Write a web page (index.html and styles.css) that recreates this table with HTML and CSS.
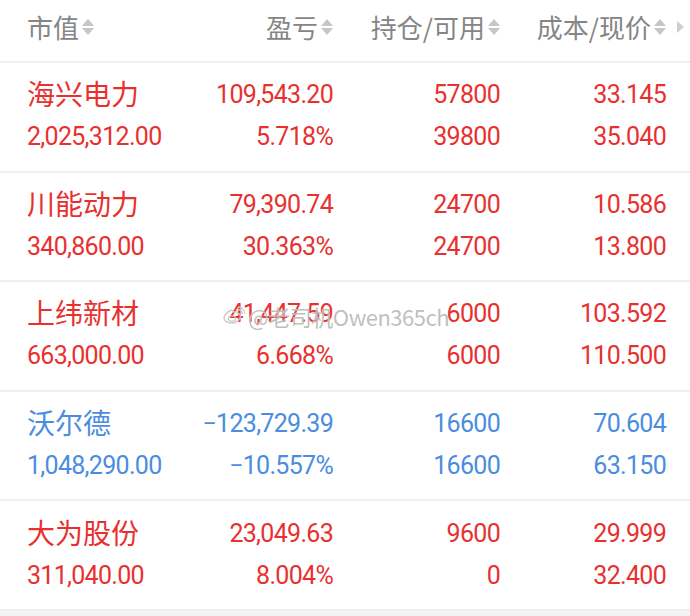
FILE: index.html
```html
<!DOCTYPE html>
<html lang="zh">
<head>
<meta charset="utf-8">
<title>持仓</title>
<link rel="stylesheet" href="styles.css">
</head>
<body>
<div class="page">
  <div class="head">
    <div class="hcell left">市值<span class="sort"></span></div>
    <div class="hcell">盈亏<span class="sort"></span></div>
    <div class="hcell">持仓/可用<span class="sort"></span></div>
    <div class="hcell">成本/现价<span class="sort"></span></div>
    <div class="more"><span class="tri"></span></div>
  </div>

  <div class="row up">
    <div class="name">海兴电力</div><div class="num">109,543.20</div><div class="num">57800</div><div class="num">33.145</div>
    <div class="val">2,025,312.00</div><div class="num">5.718%</div><div class="num">39800</div><div class="num">35.040</div>
  </div>
  <div class="row up">
    <div class="name">川能动力</div><div class="num">79,390.74</div><div class="num">24700</div><div class="num">10.586</div>
    <div class="val">340,860.00</div><div class="num">30.363%</div><div class="num">24700</div><div class="num">13.800</div>
  </div>
  <div class="row up wm-row">
    <div class="name">上纬新材</div><div class="num">41,447.59</div><div class="num">6000</div><div class="num">103.592</div>
    <div class="val">663,000.00</div><div class="num">6.668%</div><div class="num">6000</div><div class="num">110.500</div>
    <div class="watermark">
      <svg class="wb" viewBox="0 0 24 20" width="24" height="20"><path d="M10 17c-4.5 0-8-2-8-5 0-2.5 3-6 6.5-7.5 2-.8 3.3-.2 2.8 1.6 1.8-.6 4.5-1 4.2 1 1.5.4 3 1.3 3 3 0 3.5-4 6.9-8.5 6.9z" fill="none" stroke="#c8c8c8" stroke-width="1.4"/><ellipse cx="10" cy="12.5" rx="3.5" ry="2.6" fill="none" stroke="#c8c8c8" stroke-width="1.2"/><path d="M16 3.5c2.5 0 4.5 2 4.3 4.5M16 1c4 0 7 3.2 6.7 7" fill="none" stroke="#c8c8c8" stroke-width="1.3"/></svg>
      <span>@老司机Owen365ch</span>
    </div>
  </div>
  <div class="row down">
    <div class="name">沃尔德</div><div class="num">−123,729.39</div><div class="num">16600</div><div class="num">70.604</div>
    <div class="val">1,048,290.00</div><div class="num">−10.557%</div><div class="num">16600</div><div class="num">63.150</div>
  </div>
  <div class="row up">
    <div class="name">大为股份</div><div class="num">23,049.63</div><div class="num">9600</div><div class="num">29.999</div>
    <div class="val">311,040.00</div><div class="num">8.004%</div><div class="num">0</div><div class="num">32.400</div>
  </div>
  <div class="tail"></div>
</div>
</body>
</html>
```

FILE: styles.css
```css
html, body {
  margin: 0;
  padding: 0;
  background: #ffffff;
}
.page {
  width: 690px;
  height: 616px;
  overflow: hidden;
  font-family: Roboto, "Noto Sans CJK SC", sans-serif;
}
.head {
  display: grid;
  grid-template-columns: 160px 146px 167px 166px 24px;
  align-items: center;
  height: 60px;
  padding-left: 27px;
  padding-bottom: 1px;
  box-sizing: content-box;
  border-bottom: 2px solid #efefef;
  color: #858585;
  font-family: "Noto Sans CJK SC", sans-serif;
  font-size: 26px;
}
.hcell {
  display: flex;
  align-items: center;
  justify-content: flex-end;
  line-height: 1;
  padding-bottom: 6px;
}
.hcell.left { justify-content: flex-start; }
.sort {
  display: inline-flex;
  flex-direction: column;
  gap: 2px;
  margin-left: 3px;
  width: 12px;
}
.sort::before, .sort::after {
  content: "";
  width: 0;
  height: 0;
  border-left: 6px solid transparent;
  border-right: 6px solid transparent;
}
.sort::before { border-bottom: 7px solid #c6c6c6; }
.sort::after { border-top: 7px solid #c6c6c6; }
.more {
  display: flex;
  justify-content: flex-end;
  padding-right: 6px;
  padding-bottom: 6px;
}
.tri {
  width: 0;
  height: 0;
  border-top: 6px solid transparent;
  border-bottom: 6px solid transparent;
  border-left: 7px solid #cfcfcf;
}
.row {
  position: relative;
  display: grid;
  grid-template-columns: 160px 146px 167px 166px;
  grid-template-rows: 42px 42px;
  align-content: center;
  align-items: center;
  height: 107.6px;
  padding-left: 27px;
  padding-bottom: 0;
  border-bottom: 2px solid #efefef;
  box-sizing: content-box;
}
.row > div:not(.watermark) { transform: translateY(-1px); }
.row.up { color: #e8312f; }
.row.down { color: #4a8ddf; }
.name {
  font-family: "Noto Sans CJK SC", sans-serif;
  font-size: 28px;
  line-height: 1;
  margin-top: -3px;
}
.val, .num {
  font-size: 25px;
  letter-spacing: -0.7px;
  line-height: 1;
}
.num { text-align: right; }
.watermark {
  position: absolute;
  left: 222px;
  top: 18px;
  display: flex;
  align-items: center;
  gap: 2px;
  color: rgba(170, 170, 170, 0.75);
  font-family: "Noto Sans CJK SC", sans-serif;
  font-size: 22px;
  letter-spacing: -0.5px;
  text-shadow: 0 0 1px rgba(255,255,255,0.8);
  pointer-events: none;
}
.tail {
  height: 10px;
  background: #f4f4f4;
}
```
